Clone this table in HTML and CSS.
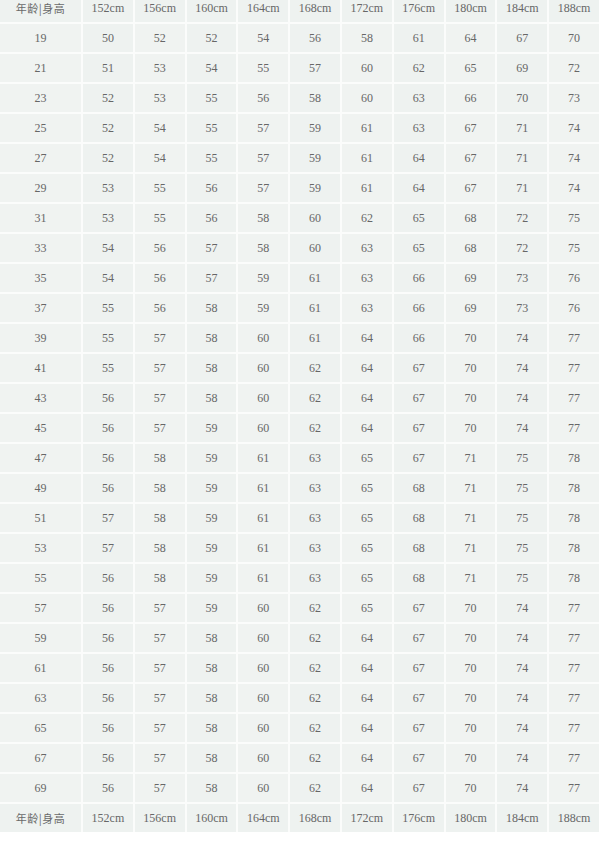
FILE: index.html
```html
<!DOCTYPE html>
<html lang="zh">
<head>
<meta charset="utf-8">
<link rel="stylesheet" href="styles.css">
</head>
<body>
<div class="sheet" id="sheet"></div>
<script src="app.js"></script>
</body>
</html>
```
FILE: styles.css
```css
html, body {
  margin: 0;
  padding: 0;
  background: #ffffff;
}
body {
  width: 601px;
  height: 842px;
  overflow: hidden;
}
.sheet {
  margin-top: -6px;
  width: 599px;
  display: grid;
  grid-template-columns: 81px repeat(10, 1fr);
  grid-auto-rows: 28px;
  gap: 2px;
  background: #fbfcfb;
}
.cell {
  background: #eef2f0;
  display: flex;
  align-items: center;
  justify-content: center;
  font-family: "Liberation Serif", "Times New Roman", serif;
  font-size: 12px;
  color: #676767;
}
.cell.alt {
  background: #f0f3f1;
}
.cell.label {
  font-family: "Noto Sans CJK SC", "Noto Sans", sans-serif;
  font-size: 11px;
  color: #6a6a6a;
  letter-spacing: 0.5px;
}
```
FILE: app.js
```js
const heights = ["152cm","156cm","160cm","164cm","168cm","172cm","176cm","180cm","184cm","188cm"];
const rows = [
 [19,50,52,52,54,56,58,61,64,67,70],
 [21,51,53,54,55,57,60,62,65,69,72],
 [23,52,53,55,56,58,60,63,66,70,73],
 [25,52,54,55,57,59,61,63,67,71,74],
 [27,52,54,55,57,59,61,64,67,71,74],
 [29,53,55,56,57,59,61,64,67,71,74],
 [31,53,55,56,58,60,62,65,68,72,75],
 [33,54,56,57,58,60,63,65,68,72,75],
 [35,54,56,57,59,61,63,66,69,73,76],
 [37,55,56,58,59,61,63,66,69,73,76],
 [39,55,57,58,60,61,64,66,70,74,77],
 [41,55,57,58,60,62,64,67,70,74,77],
 [43,56,57,58,60,62,64,67,70,74,77],
 [45,56,57,59,60,62,64,67,70,74,77],
 [47,56,58,59,61,63,65,67,71,75,78],
 [49,56,58,59,61,63,65,68,71,75,78],
 [51,57,58,59,61,63,65,68,71,75,78],
 [53,57,58,59,61,63,65,68,71,75,78],
 [55,56,58,59,61,63,65,68,71,75,78],
 [57,56,57,59,60,62,65,67,70,74,77],
 [59,56,57,58,60,62,64,67,70,74,77],
 [61,56,57,58,60,62,64,67,70,74,77],
 [63,56,57,58,60,62,64,67,70,74,77],
 [65,56,57,58,60,62,64,67,70,74,77],
 [67,56,57,58,60,62,64,67,70,74,77],
 [69,56,57,58,60,62,64,67,70,74,77]
];
const sheet = document.getElementById("sheet");
function add(text, cls) {
  const d = document.createElement("div");
  d.className = "cell" + (cls ? " " + cls : "");
  d.textContent = text;
  sheet.appendChild(d);
}
function header() {
  add("年龄|身高", "label");
  heights.forEach(h => add(h));
}
header();
rows.forEach(r => r.forEach((v, i) => add(String(v), i % 2 ? "" : "alt")));
header();
```
